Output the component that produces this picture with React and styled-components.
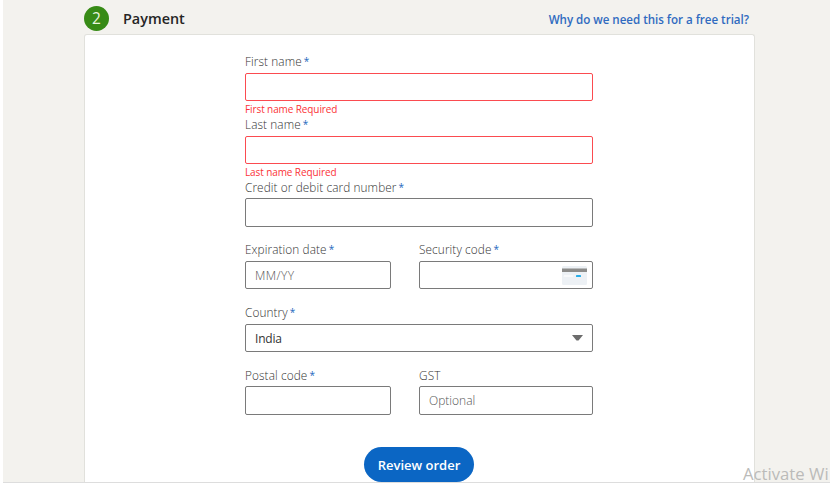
import React from "react";
import styled, { createGlobalStyle } from "styled-components";

const GlobalStyle = createGlobalStyle`
  * { box-sizing: border-box; }
  body { margin: 0; background: #fff; font-family: "Open Sans", "Noto Sans", sans-serif; }
`;

const Page = styled.div`
  position: relative;
  width: 827px;
  height: 483px;
  margin-left: 3px;
  padding: 0 75px 0 81px;
  background: #f3f2ee;
  border-bottom: 1px solid #dddddd;
  display: flex;
  flex-direction: column;
`;

const Header = styled.header`
  height: 34px;
  flex: none;
  display: flex;
  align-items: center;
  padding: 2px 6px 0 0;
`;

const Step = styled.span`
  width: 25px;
  height: 25px;
  border-radius: 50%;
  background: #378b16;
  color: #e9f5df;
  font-size: 15.5px;
  line-height: 25px;
  text-align: center;
`;

const Title = styled.h2`
  margin: 0 auto 0 14px;
  padding-top: 2px;
  font-size: 14.4px;
  line-height: 24px;
  font-weight: 600;
  color: #252525;
`;

const HelpLink = styled.a`
  font-size: 11.6px;
  font-weight: 600;
  line-height: 20px;
  padding-top: 4px;
  letter-spacing: -0.03px;
  color: #306bc0;
  white-space: nowrap;
`;

const Card = styled.main`
  flex: 1;
  border: 1px solid #e1e1dc;
  border-bottom: 0;
  border-radius: 3px 3px 0 0;
  background: #fff;
  display: flex;
  flex-direction: column;
  align-items: center;
  padding-top: 17px;
`;

const Form = styled.form`
  width: 348px;
  margin-right: 1px;
  display: flex;
  flex-direction: column;
`;

const Row = styled.div`
  display: grid;
  grid-template-columns: 146px 174px;
  column-gap: 28px;
`;

const Field = styled.div`
  height: ${(p) => p.$height}px;
  display: flex;
  flex-direction: column;
`;

const Label = styled.label`
  height: ${(p) => p.$height}px;
  line-height: ${(p) => p.$line}px;
  font-size: 11.8px;
  font-weight: 350;
  letter-spacing: ${(p) => p.$spacing}px;
  color: #333;
  white-space: nowrap;
`;

const Star = styled.span`
  margin-left: 2px;
  color: #2467bd;
  font-size: 10px;
  font-weight: 400;
  line-height: 0;
  vertical-align: 1px;
`;

const Control = styled.div`
  height: ${(p) => p.$height}px;
  flex: none;
  border: 1px solid ${(p) => (p.$invalid ? "#fb4b50" : "#7a7a7a")};
  border-radius: 2px;
  background: #fff;
  display: flex;
  align-items: center;
  justify-content: space-between;
  padding: 0 5px 0 9px;
`;

const Value = styled.span`
  font-size: 12px;
  line-height: 18px;
  padding-top: 1px;
  font-weight: ${(p) => (p.$hint ? 300 : 400)};
  letter-spacing: ${(p) => p.$spacing || 0}px;
  color: ${(p) => (p.$hint ? "#555" : "#333")};
`;

const ErrorText = styled.span`
  font-size: 10px;
  line-height: 16px;
  height: 14px;
  letter-spacing: -0.1px;
  color: #fb3337;
`;

const Caret = styled.svg`
  width: 11px;
  height: 6px;
  margin-right: 4px;
`;

const CardIcon = styled.svg`
  width: 25px;
  height: 19px;
`;

const Submit = styled.button`
  align-self: center;
  width: 110px;
  height: 35px;
  flex: none;
  padding: 0;
  border: 0;
  border-radius: 18px;
  background: #0b66c4;
  color: #fff;
  font-family: inherit;
  font-size: 13px;
  font-weight: 600;
  white-space: nowrap;
`;

const Watermark = styled.div`
  position: absolute;
  left: 740px;
  bottom: -4px;
  font-size: 16.7px;
  line-height: 24px;
  color: #bbbbb9;
  white-space: nowrap;
`;

function FormField({
  label,
  required,
  height = 63,
  labelHeight = 20,
  line = 16,
  spacing = 0.1,
  controlHeight = 28,
  error,
  children,
}) {
  return (
    <Field $height={height}>
      <Label $height={labelHeight} $line={line} $spacing={spacing}>
        {label}
        {required && <Star>*</Star>}
      </Label>
      <Control $invalid={Boolean(error)} $height={controlHeight}>{children}</Control>
      {error && <ErrorText>{error}</ErrorText>}
    </Field>
  );
}

export default function App() {
  return (
    <>
      <GlobalStyle />
      <Page>
        <Header>
          <Step>2</Step>
          <Title>Payment</Title>
          <HelpLink>Why do we need this for a free trial?</HelpLink>
        </Header>
        <Card>
          <Form>
            <FormField label="First name" required labelHeight={21} line={18} error="First name Required" />
            <FormField label="Last name" required labelHeight={21} line={18} error="Last name Required" />
            <FormField label="Credit or debit card number" required line={18} controlHeight={29} />
            <Row>
              <FormField label="Expiration date" required>
                <Value $hint $spacing={0.4}>MM/YY</Value>
              </FormField>
              <FormField label="Security code" required>
                <span />
                <CardIcon viewBox="0 0 25 19">
                  <rect width="25" height="19" rx="1.5" fill="#edf1f5" />
                  <rect y="2.5" width="25" height="3.5" fill="#8c8c8a" />
                  <path d="M2 11l1-2 1 2 1-2 1 2 1-2 1 2 1-2 1 2 1-2" fill="none" stroke="#fff" strokeWidth=".7" />
                  <rect x="14" y="9" width="5" height="2" rx=".6" fill="#28aee8" />
                </CardIcon>
              </FormField>
            </Row>
            <FormField label="Country" required>
              <Value $spacing={-0.2}>India</Value>
              <Caret viewBox="0 0 11 6"><path d="M0 0h11L6.5 5.5h-2z" fill="#6c6c6c" /></Caret>
            </FormField>
            <Row>
              <FormField label="Postal code" required labelHeight={19} controlHeight={29} height={80} />
              <FormField label="GST" labelHeight={19} controlHeight={29} height={80}>
                <Value $hint>Optional</Value>
              </FormField>
            </Row>
            <Submit type="button">Review order</Submit>
          </Form>
        </Card>
        <Watermark>Activate Wi</Watermark>
      </Page>
    </>
  );
}
